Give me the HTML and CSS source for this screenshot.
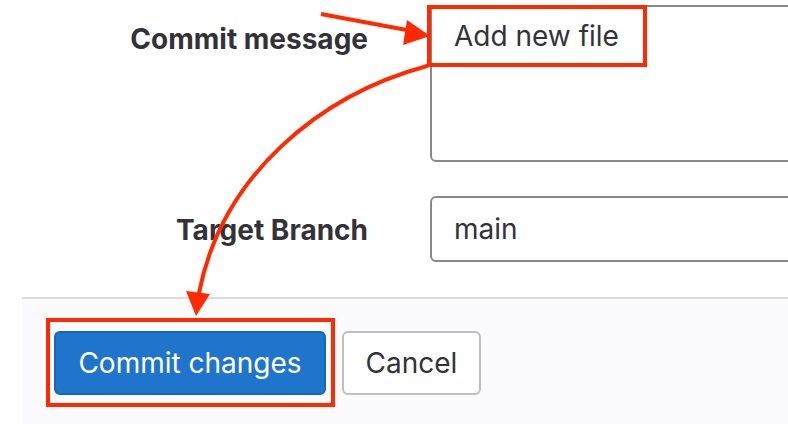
FILE: index.html
```html
<!DOCTYPE html>
<html lang="en">
<head>
<meta charset="utf-8">
<title>Commit changes</title>
<link rel="stylesheet" href="styles.css">
</head>
<body>
<div class="page">
  <form class="form">
    <div class="row row-message">
      <label class="label label-top" for="msg">Commit message</label>
      <div class="field">
        <textarea id="msg" class="textarea">Add new file</textarea>
      </div>
    </div>
    <div class="row row-branch">
      <label class="label label-mid" for="branch">Target Branch</label>
      <div class="field">
        <input id="branch" class="input" type="text" value="main">
      </div>
    </div>
    <div class="footer">
      <button type="button" class="btn btn-primary">Commit changes</button>
      <button type="button" class="btn btn-default">Cancel</button>
    </div>
  </form>
  <svg class="annotations" width="788" height="424" viewBox="0 0 788 424" aria-hidden="true">
    <g fill="none" stroke="#ff2a00" stroke-width="4">
      <rect x="429" y="7" width="216" height="58"/>
      <rect x="48" y="320" width="285" height="85"/>
      <path d="M321 14 L412 31"/>
      <path d="M427 66 C320 95 222 175 199 293" stroke-linecap="round"/>
    </g>
    <g fill="#ff2a00">
      <polygon points="407,20 403,45 430,36"/>
      <polygon points="186,291 210,294 196,316"/>
    </g>
  </svg>
</div>
</body>
</html>
```

FILE: styles.css
```css
html, body {
  margin: 0;
  padding: 0;
  background: #ffffff;
  overflow: hidden;
}

body {
  width: 788px;
  height: 424px;
  font-family: Inter, "Noto Sans", "Liberation Sans", sans-serif;
  color: #333238;
}

.page {
  position: relative;
  width: 788px;
  height: 424px;
  overflow: hidden;
}

.form {
  display: flex;
  flex-direction: column;
  padding-top: 5px;
  width: 1100px;
}

.row {
  display: flex;
  align-items: flex-start;
  gap: 62px;
}

.row-branch {
  margin-top: 34px;
  align-items: center;
}

.label {
  width: 368px;
  flex: 0 0 368px;
  text-align: right;
  font-size: 28px;
  font-weight: 700;
  line-height: 34px;
  color: #333238;
}

.label-top {
  padding-top: 17px;
}

.label-mid {
  padding-top: 2px;
}

.field {
  flex: 1;
}

.textarea,
.input {
  display: block;
  box-sizing: border-box;
  width: 100%;
  margin: 0;
  font-family: Inter, "Noto Sans", "Liberation Sans", sans-serif;
  font-size: 28px;
  color: #333238;
  background: #ffffff;
  border: 2px solid #89888d;
  border-radius: 6px;
  outline: none;
  resize: none;
}

.textarea {
  height: 157px;
  padding: 12px 22px;
  line-height: 34px;
}

.input {
  height: 66px;
  padding: 0 22px;
  line-height: 34px;
}

.footer {
  margin-top: 35px;
  margin-left: 22px;
  border-top: 2px solid #dcdcde;
  background: #fbfafd;
  height: 130px;
  box-sizing: border-box;
  padding: 32px 0 0 32px;
  display: flex;
  align-items: flex-start;
  gap: 16px;
}

.btn {
  box-sizing: border-box;
  height: 64px;
  font-family: Inter, "Noto Sans", "Liberation Sans", sans-serif;
  font-size: 28px;
  line-height: 34px;
  border-radius: 6px;
  padding: 0 20px;
  cursor: pointer;
}

.btn-primary {
  width: 272px;
  background: #1f75cb;
  border: 2px solid #1068bf;
  color: #ffffff;
}

.btn-default {
  width: 139px;
  background: #ffffff;
  border: 2px solid #bfbfc3;
  color: #333238;
}

.annotations {
  position: absolute;
  left: 0;
  top: 0;
  pointer-events: none;
}
```
